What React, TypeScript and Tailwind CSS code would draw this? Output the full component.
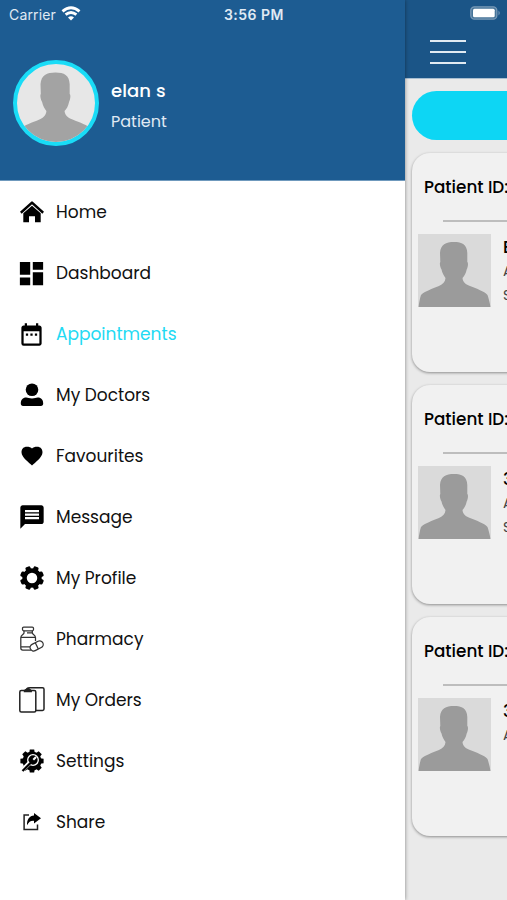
import type { ReactNode } from "react"
import { MdDashboard, MdDateRange, MdMessage } from "react-icons/md"

const TEETH = [0, 45, 90, 135, 180, 225, 270, 315]

function Silhouette({ className }: { className: string }) {
  return (
    <svg viewBox="0 0 73 73" className={className} fill="currentColor">
      <path d="M36 8C28 8 22.500 10.500 22 19L22.300 28C21.300 29 22.200 33.500 23.500 35.500C24.200 39 26 42 27.500 44C27.200 48 25 50 21 52C14 55 7 57 3 61C2 64 1 69 .6 73H72.400C72 69 70.500 64 69.500 61C66 57 59 55 52 52C47 50 45 48 44.500 44C46.500 42 48 39 48.700 35.500C49.800 33.500 50.600 29 49.300 28L49.300 19C49 10.500 44 8 36 8Z" />
    </svg>
  )
}

function HomeIcon() {
  return (
    <svg viewBox="0 0 24 24" className="size-6" fill="none">
      <path d="M.8 12.700L12 2.600L23.200 12.700" stroke="black" strokeWidth="2.500" strokeLinejoin="round" />
      <path d="M3.300 13.300L12 5.800L20.700 13.300V22.300H15V16.300H9V22.300H3.300Z" fill="black" />
    </svg>
  )
}

function PersonIcon() {
  return (
    <svg viewBox="0 0 24 24" className="size-6">
      <circle cx="12" cy="6.800" r="6.300" />
      <path d="M.8 20.500C.8 17.200 2.700 14.600 6.200 14.600C8.300 14.600 9 15.500 12 15.500S15.700 14.600 17.800 14.600C21.300 14.600 23.200 17.200 23.200 20.500C23.200 22 22.400 23 21 23H3C1.600 23 .8 22 .8 20.500Z" />
    </svg>
  )
}

function HeartIcon() {
  return (
    <svg viewBox="0 0 24 24" className="size-6">
      <path d="M12 21.500C9 18.600 1.500 13.500 1.500 8.300C1.500 5 3.700 2.800 6.700 2.800C9.200 2.800 11 3.400 12 4.400C13 3.400 14.800 2.800 17.300 2.800C20.300 2.800 22.500 5 22.500 8.300C22.500 13.500 15 18.600 12 21.500Z" />
    </svg>
  )
}

function GearIcon() {
  return (
    <svg viewBox="0 0 24 24" className="size-6">
      <circle cx="12" cy="12" r="7.500" fill="none" stroke="black" strokeWidth="4.500" />
      {TEETH.map((angle) => (
        <rect key={angle} x="9.400" y="0" width="5.200" height="5" rx="1.500" transform={`rotate(${angle + 22.5} 12 12)`} />
      ))}
    </svg>
  )
}

function PharmacyIcon() {
  return (
    <svg viewBox="0 0 24 26" className="h-[26px] w-6" fill="none" stroke="#333" strokeWidth="1.250">
      <rect x="2.500" y="1" width="11" height="3.800" rx="1.200" />
      <path d="M4 4.800V7C4 8.300 .8 9 .8 11.500V22C.8 23.200 1.500 24 2.800 24H11M12.300 4.800V7C12.300 8.300 15.500 9 15.500 11.500V15M7 6.800H12M.8 11.300H15.500M.8 20.800H10" />
      <rect x="9.800" y="16.300" width="13.800" height="7" rx="3.500" transform="rotate(-27 17 20)" />
      <path d="M15.300 16.800L18.300 23" />
    </svg>
  )
}

function OrdersIcon() {
  return (
    <svg viewBox="0 0 26 26" className="size-[26px]" fill="none" stroke="#222" strokeWidth="1.500">
      <path d="M8 1.500C9 .8 10 .8 11 .8H23.500Q25 .8 25 2.200V22Q25 23.400 23.500 23.400H17" />
      <rect x=".8" y="3.500" width="16" height="21.500" rx="1.500" />
      <path d="M5.500 4.600C5.500 3 6.500 3 7.300 2.500C8 1.300 9.700 1.300 10.400 2.500C11.200 3 12.200 3 12.200 4.600Z" fill="#222" />
    </svg>
  )
}

function SettingsIcon() {
  return (
    <svg viewBox="0 0 24 24" className="size-6">
      <circle cx="12" cy="12" r="9.500" />
      {TEETH.map((angle) => (
        <path key={angle} d="M9.200 4L9.800 .4H14.200L14.800 4Z" transform={`rotate(${angle} 12 12)`} />
      ))}
      <circle cx="13" cy="11" r="5.300" fill="none" stroke="white" strokeWidth="1.300" />
      <path d="M2 21.500L10 13.500" stroke="white" strokeWidth="4.400" />
      <path d="M2.500 22L12 12.500" stroke="black" strokeWidth="2.300" />
      <circle cx="13" cy="11.300" r="3.500" />
      <path d="M13.300 10.800L16 8" stroke="white" strokeWidth="2" />
    </svg>
  )
}

function ShareIcon() {
  return (
    <svg viewBox="0 0 24 24" className="size-6" fill="none">
      <path d="M9 5H4.100V19.500H17.500V14.500" stroke="#222" strokeWidth="1.500" />
      <path d="M14 3L21 8.300L14 13.600V10.900C10.500 10.600 9 12 7 15.300C6.800 9.500 9.500 6 14 5.600Z" fill="black" />
    </svg>
  )
}

interface MenuItem {
  label: string
  icon: ReactNode
  active?: boolean
}

const menuItems: MenuItem[] = [
  { label: "Home", icon: <HomeIcon /> },
  { label: "Dashboard", icon: <MdDashboard size={31} className="shrink-0" /> },
  { label: "Appointments", icon: <MdDateRange size={27} />, active: true },
  { label: "My Doctors", icon: <PersonIcon /> },
  { label: "Favourites", icon: <HeartIcon /> },
  { label: "Message", icon: <MdMessage size={28} /> },
  { label: "My Profile", icon: <GearIcon /> },
  { label: "Pharmacy", icon: <PharmacyIcon /> },
  { label: "My Orders", icon: <OrdersIcon /> },
  { label: "Settings", icon: <SettingsIcon /> },
  { label: "Share", icon: <ShareIcon /> },
]

const patients = [
  { name: "E", lines: ["A", "S"] },
  { name: "3", lines: ["A", "S"] },
  { name: "3", lines: ["A"] },
]

function Drawer() {
  return (
    <aside className="z-10 flex w-[405px] shrink-0 flex-col bg-white shadow-[0_0_4px_rgba(0,0,0,0.45)]">
      <header className="h-[181px] border-b border-[#6f99bd] bg-[#1d5c92] text-white">
        <div className="flex h-7 items-center pl-[9px] font-[Inter,sans-serif] text-[14px] text-[#e0eaf4]">
          <span className="w-[52px] tracking-[0.15px]">Carrier</span>
          <svg viewBox="0 0 20 15" className="mt-[-2px] h-[15px] w-5" fill="none" stroke="white" strokeWidth="2.800">
            <path d="M1.500 5.400Q10-2 18.500 5.400M4.600 8.700Q10 4.200 15.400 8.700" />
            <path d="M7 11.500Q10 9 13 11.500L10 14.500Z" fill="white" stroke="none" />
          </svg>
          <span className="ml-[143px] text-[14px] font-semibold tracking-[0.45px] whitespace-nowrap">3:56 PM</span>
        </div>
        <div className="flex items-center pt-8 pl-[13px]">
          <div className="size-[86px] overflow-hidden rounded-full border-4 border-[#19dcf7] bg-[#e7e7e7] text-[#a3a3a3]">
            <Silhouette className="size-[78px]" />
          </div>
          <div className="ml-3 flex flex-col gap-[7px] pt-1.5">
            <span className="text-[18px] leading-6 font-medium tracking-[0.1px]">elan s</span>
            <span className="text-[16px] leading-6 text-[#e0eaf4]">Patient</span>
          </div>
        </div>
      </header>
      <nav className="pt-px">
        {menuItems.map((item) => (
          <a key={item.label} className="flex h-[61.050px] items-center pl-4">
            <span className="flex w-[31px] justify-center pb-px text-black">{item.icon}</span>
            <span className={`ml-[9px] text-[17px] ${item.active ? "text-[#22daf3]" : "text-[#111]"}`}>
              {item.label}
            </span>
          </a>
        ))}
      </nav>
    </aside>
  )
}

function PatientCard({ name, lines }: { name: string; lines: string[] }) {
  return (
    <article className="h-[219px] w-[380px] shrink-0 rounded-[18px] bg-[#f1f1f1] pt-[23px] pl-1.5 shadow-[0_1px_3px_rgba(0,0,0,0.4)]">
      <h2 className="pl-1.5 text-[16.800px] leading-[22px] font-medium whitespace-nowrap text-black">Patient ID:</h2>
      <hr className="mt-[22px] ml-[25px] border-t-2 border-[#bdbdbd]" />
      <div className="mt-3 flex">
        <div className="size-[73px] bg-[#dadada] text-[#9b9b9b]">
          <Silhouette className="size-[73px]" />
        </div>
        <div className="ml-[12px] flex flex-col pt-px">
          <span className="text-[17px] leading-6 font-medium text-black">{name}</span>
          {lines.map((line) => (
            <span key={line} className="text-[14px] leading-6 text-[#444]">{line}</span>
          ))}
        </div>
      </div>
    </article>
  )
}

function Page() {
  return (
    <main className="flex min-w-0 flex-1 flex-col overflow-hidden bg-[#eaeaea]">
      <header className="h-[79px] shrink-0 border-b border-[#a8bfd2] bg-[#1b5587]">
        <div className="flex h-7 items-center justify-end pr-[6px]">
          <svg viewBox="0 0 31 14" className="mt-[-2px] h-[14px] w-[31px]">
            <rect x=".8" y=".8" width="26" height="12.400" rx="3.600" fill="#477599" stroke="#7899b7" strokeWidth="1.300" />
            <rect x="3" y="2.700" width="21.700" height="8.600" rx="1.500" fill="white" />
            <path d="M28.500 4.500Q31 7 28.500 9.500Z" fill="#7899b7" />
          </svg>
        </div>
        <button className="mt-3 ml-[25px] flex w-9 flex-col gap-[9px]" aria-label="Menu">
          <span className="h-0.5 w-full bg-[#e1eaf2]" />
          <span className="h-0.5 w-full bg-[#e1eaf2]" />
          <span className="h-0.5 w-full bg-[#e1eaf2]" />
        </button>
      </header>
      <div className="flex flex-col pt-3 pl-[7px]">
        <button className="h-[49px] w-[380px] rounded-full bg-[#0dd6f4]" aria-label="Appointments" />
        <div className="mt-[13px] flex flex-col gap-[13px]">
          {patients.map((patient, index) => (
            <PatientCard key={index} {...patient} />
          ))}
        </div>
      </div>
    </main>
  )
}

export default function App() {
  return (
    <div className="flex h-[900px] w-[507px] overflow-hidden bg-white font-[Poppins,Inter,sans-serif]">
      <Drawer />
      <Page />
    </div>
  )
}
